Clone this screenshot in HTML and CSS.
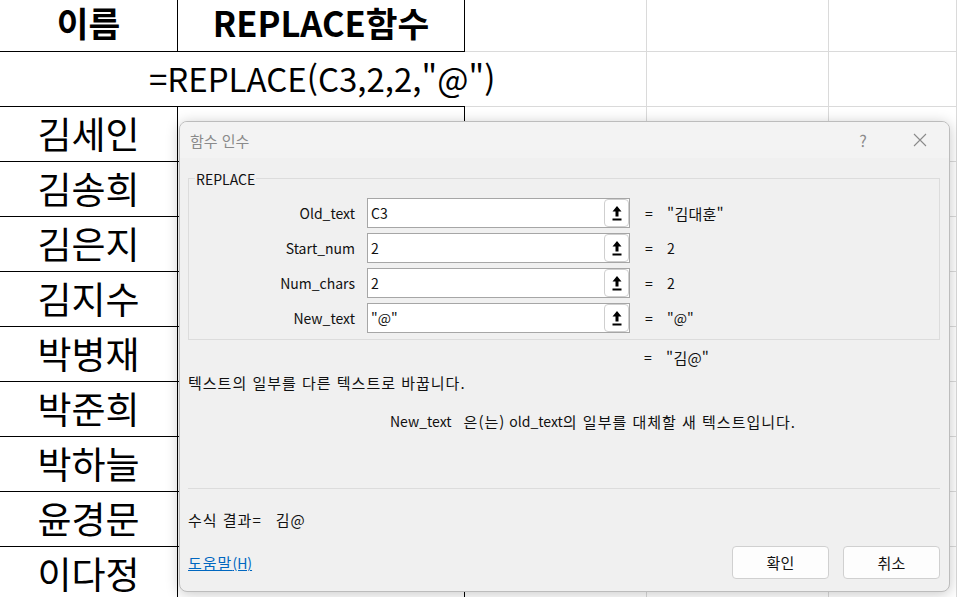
FILE: index.html
```html
<!DOCTYPE html>
<html lang="ko">
<head>
<meta charset="utf-8">
<title>REPLACE 함수</title>
<link rel="stylesheet" href="styles.css">
</head>
<body>
<div class="sheet">
  <div class="cell bk head">이름</div>
  <div class="cell bk head">REPLACE함수</div>
  <div class="cell"></div><div class="cell"></div><div class="cell"></div>

  <div class="cell formula">=REPLACE(C3,2,2,"@")</div>
  <div class="cell"></div><div class="cell"></div><div class="cell"></div>

  <div class="cell bk name">김세인</div><div class="cell bk"></div><div class="cell"></div><div class="cell"></div><div class="cell"></div>
  <div class="cell bk name">김송희</div><div class="cell bk"></div><div class="cell"></div><div class="cell"></div><div class="cell"></div>
  <div class="cell bk name">김은지</div><div class="cell bk"></div><div class="cell"></div><div class="cell"></div><div class="cell"></div>
  <div class="cell bk name">김지수</div><div class="cell bk"></div><div class="cell"></div><div class="cell"></div><div class="cell"></div>
  <div class="cell bk name">박병재</div><div class="cell bk"></div><div class="cell"></div><div class="cell"></div><div class="cell"></div>
  <div class="cell bk name">박준희</div><div class="cell bk"></div><div class="cell"></div><div class="cell"></div><div class="cell"></div>
  <div class="cell bk name">박하늘</div><div class="cell bk"></div><div class="cell"></div><div class="cell"></div><div class="cell"></div>
  <div class="cell bk name">윤경문</div><div class="cell bk"></div><div class="cell"></div><div class="cell"></div><div class="cell"></div>
  <div class="cell bk name">이다정</div><div class="cell bk"></div><div class="cell"></div><div class="cell"></div><div class="cell"></div>
</div>

<div class="dialog">
  <div class="titlebar">
    <span class="title">함수 인수</span>
    <span class="help">?</span>
    <span class="close">
      <svg width="14" height="14" viewBox="0 0 14 14"><path d="M1 1L13 13M13 1L1 13" stroke="#8a8a8a" stroke-width="1.1" fill="none"/></svg>
    </span>
  </div>
  <div class="dbody">
    <div class="group">
      <span class="legend">REPLACE</span>
      <div class="args">
        <div class="label">Old_text</div>
        <div class="input"><span class="itext">C3</span><span class="pick"><svg width="10" height="15" viewBox="0 0 10 15"><path d="M5 0L9.5 5.5H6.5V10.5H3.5V5.5H0.5Z" fill="#000"/><rect x="0.5" y="12.5" width="9" height="2" fill="#000"/></svg></span></div>
        <div class="val"><span class="eq">=</span><span class="kr">"김대훈"</span></div>

        <div class="label">Start_num</div>
        <div class="input"><span class="itext">2</span><span class="pick"><svg width="10" height="15" viewBox="0 0 10 15"><path d="M5 0L9.5 5.5H6.5V10.5H3.5V5.5H0.5Z" fill="#000"/><rect x="0.5" y="12.5" width="9" height="2" fill="#000"/></svg></span></div>
        <div class="val"><span class="eq">=</span>2</div>

        <div class="label">Num_chars</div>
        <div class="input"><span class="itext">2</span><span class="pick"><svg width="10" height="15" viewBox="0 0 10 15"><path d="M5 0L9.5 5.5H6.5V10.5H3.5V5.5H0.5Z" fill="#000"/><rect x="0.5" y="12.5" width="9" height="2" fill="#000"/></svg></span></div>
        <div class="val"><span class="eq">=</span>2</div>

        <div class="label">New_text</div>
        <div class="input"><span class="itext">"@"</span><span class="pick"><svg width="10" height="15" viewBox="0 0 10 15"><path d="M5 0L9.5 5.5H6.5V10.5H3.5V5.5H0.5Z" fill="#000"/><rect x="0.5" y="12.5" width="9" height="2" fill="#000"/></svg></span></div>
        <div class="val"><span class="eq">=</span>"@"</div>
      </div>
    </div>
    <div class="result-row"><span class="eq">=</span><span class="kr">"김@"</span></div>
    <div class="desc"><span class="kr wide">텍스트의 일부를 다른 텍스트로 바꿉니다.</span></div>
    <div class="arghelp"><span class="argname">New_text</span><span class="kr wide">은(는)</span>&nbsp;old_text<span class="kr wide">의 일부를 대체할 새 텍스트입니다.</span></div>
    <div class="sep"></div>
    <div class="fresult"><span class="fr-label kr wide">수식 결과=</span><span class="kr wide">김@</span></div>
    <div class="footer">
      <a class="link" href="#"><span class="kr wide">도움말</span>(H)</a>
      <button class="btn"><span class="kr">확인</span></button>
      <button class="btn"><span class="kr">취소</span></button>
    </div>
  </div>
</div>
</body>
</html>
```
FILE: styles.css
```css
html, body {
  margin: 0;
  padding: 0;
}
body {
  width: 957px;
  height: 597px;
  overflow: hidden;
  position: relative;
  background: #fff;
  font-family: "Noto Sans CJK KR", "Noto Sans", sans-serif;
  color: #000;
}

.sheet {
  display: grid;
  grid-template-columns: 178px 287px 182px 182px 128px;
  grid-template-rows: 52px repeat(10, 55px);
}
.cell {
  box-sizing: border-box;
  border-right: 1px solid #dadada;
  border-bottom: 1px solid #dadada;
  display: flex;
  align-items: center;
  justify-content: center;
  white-space: nowrap;
  font-size: 34px;
  line-height: 1.15;
}
.bk {
  border-right-color: #000;
  border-bottom-color: #000;
}
.head {
  font-weight: 700;
  font-size: 34.5px;
  padding-bottom: 5px;
}
.name {
  font-size: 37px;
  padding-bottom: 2px;
}
.formula {
  grid-column: span 2;
  justify-content: flex-start;
  padding-left: 149px;
  border-right: none;
  border-bottom-color: #000;
  overflow: visible;
  position: relative;
  z-index: 1;
  font-size: 33px;
}

/* dialog */
.dialog {
  position: absolute;
  left: 179px;
  top: 121px;
  width: 771px;
  height: 471px;
  box-sizing: border-box;
  border: 1px solid #bcbcbc;
  border-radius: 8px;
  background: #f0f0f0;
  box-shadow: 0 2px 14px rgba(0, 0, 0, 0.22);
  overflow: hidden;
  display: flex;
  flex-direction: column;
  font-size: 14px;
  color: #111;
}
.kr {
  font-size: 15px;
  letter-spacing: 0.25px;
}
.kr.wide {
  letter-spacing: 1px;
}
.titlebar {
  height: 36px;
  flex: none;
  background: #f3f3f3;
  display: flex;
  align-items: center;
  padding-left: 10px;
}
.title {
  color: #8a8a8a;
  font-size: 15px;
}
.help {
  margin-left: auto;
  width: 20px;
  text-align: center;
  color: #8a8a8a;
  font-size: 16px;
}
.close {
  width: 20px;
  margin-left: 37px;
  margin-right: 19px;
  display: flex;
  justify-content: center;
}

.dbody {
  flex: 1;
  display: flex;
  flex-direction: column;
  padding: 0 9px 11px 8px;
}
.group {
  position: relative;
  margin-top: 20px;
  height: 162px;
  box-sizing: border-box;
  border: 1px solid #dcdcdc;
  padding-top: 19px;
}
.legend {
  position: absolute;
  top: -10px;
  left: 6px;
  padding: 0 1px;
  background: #f0f0f0;
  line-height: 20px;
}
.args {
  display: grid;
  grid-template-columns: 166px 263px 1fr;
  grid-auto-rows: 30px;
  column-gap: 12px;
  row-gap: 5px;
}
.label {
  display: flex;
  align-items: center;
  justify-content: flex-end;
}
.input {
  box-sizing: border-box;
  border: 1px solid #a6a6a6;
  background: #fff;
  display: flex;
  align-items: stretch;
}
.itext {
  flex: 1;
  display: flex;
  align-items: center;
  padding-left: 3px;
}
.pick {
  width: 25px;
  box-sizing: border-box;
  border: 1px solid #cfcfcf;
  border-radius: 4px;
  background: #fff;
  display: flex;
  align-items: center;
  justify-content: center;
}
.val {
  display: flex;
  align-items: center;
  padding-left: 3px;
}
.eq {
  display: inline-block;
  width: 22px;
}
.result-row {
  margin-top: 5px;
  height: 24px;
  display: flex;
  align-items: center;
  padding-left: 456px;
}
.desc {
  margin-top: 1px;
  height: 24px;
  display: flex;
  align-items: center;
}
.arghelp {
  margin-top: 15px;
  height: 24px;
  display: flex;
  align-items: center;
  padding-left: 202px;
  white-space: pre;
}
.argname {
  margin-right: 12px;
}
.sep {
  margin-top: 55px;
  border-top: 1px solid #dcdcdc;
}
.fresult {
  margin-top: 18px;
  height: 24px;
  display: flex;
  align-items: center;
}
.fr-label {
  margin-right: 14px;
}
.footer {
  margin-top: 15px;
  display: flex;
  align-items: center;
  gap: 14px;
}
.link {
  color: #0067c0;
  text-decoration: underline;
  margin-right: auto;
  font-size: 14px;
}
.btn {
  width: 97px;
  height: 33px;
  box-sizing: border-box;
  border: 1px solid #d0d0d0;
  border-radius: 4px;
  background: #fdfdfd;
  font-family: "Noto Sans CJK KR", "Noto Sans", sans-serif;
  font-size: 14px;
  color: #111;
  padding: 0;
}
```
